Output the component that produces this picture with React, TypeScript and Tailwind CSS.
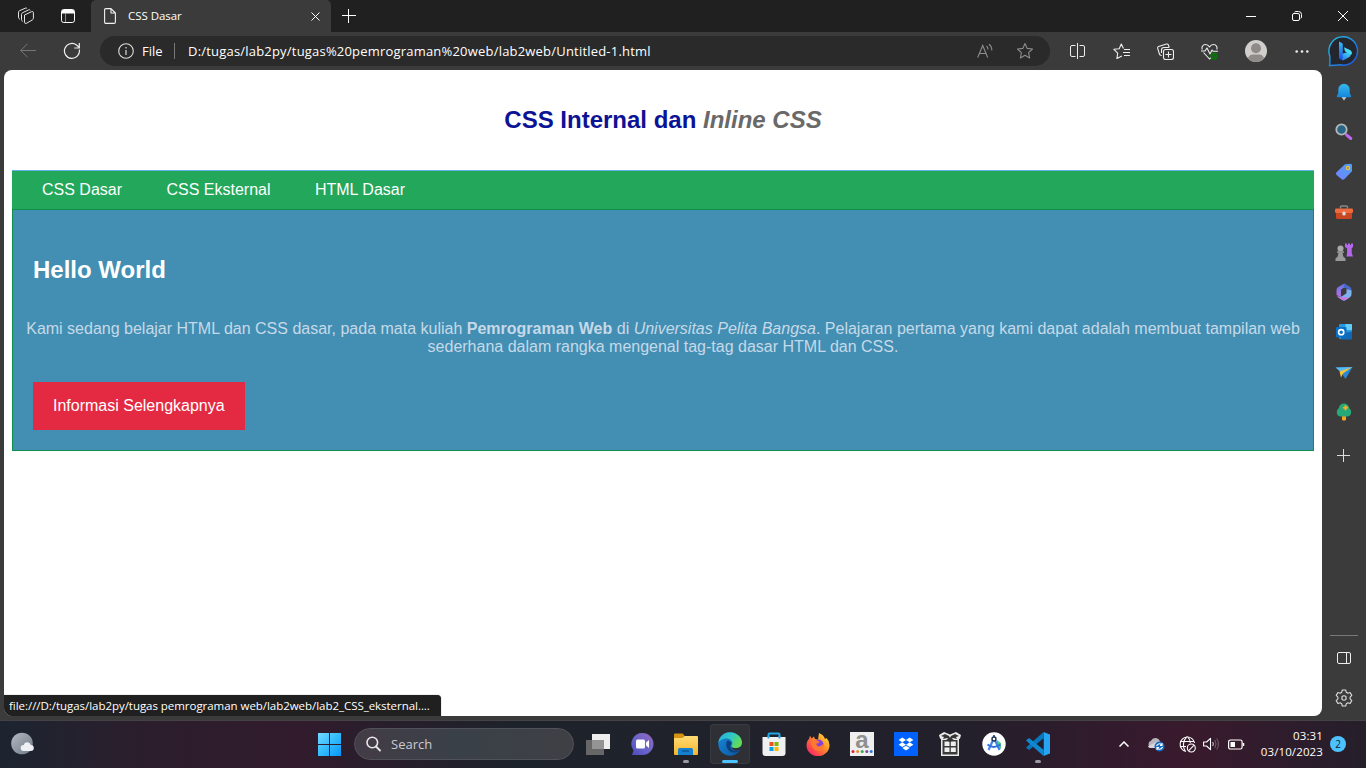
import type { ReactNode } from "react";

const ui = "font-['Open_Sans','Noto_Sans',sans-serif]";

function Svg({ w, h = w, vb, children, className = "" }: { w: number; h?: number; vb?: string; children: ReactNode; className?: string }) {
  return (
    <svg width={w} height={h} viewBox={vb ?? `0 0 ${w} ${h}`} fill="none" className={`shrink-0 ${className}`}>
      {children}
    </svg>
  );
}

function Cell({ className, children }: { className: string; children?: ReactNode }) {
  return <div className={`flex shrink-0 items-center justify-center ${className}`}>{children}</div>;
}

function TitleBar() {
  return (
    <div className="flex h-8 shrink-0 bg-[#202020]">
      <Cell className="w-[52px]">
        <Svg w={18}>
          <g stroke="#e6e6e6" strokeWidth="1" strokeLinejoin="round">
            <path d="M7.500 8 14.500 4.700q1.800-.6 1.900.9v5.700q0 1-.9 1.500l-5.800 3.400q-2.100.9-2.200-.9z" />
            <path d="M6 14.500 5.300 14q-.8-.4-.8-1.400V7.300q0-1 1-1.500L11.500 2.900q1.500-.6 1.700.5" />
            <path d="M3 12.300 2.300 11.800q-.8-.4-.8-1.400V5.200q0-1 1-1.500L8.300 1.200q1.300-.5 1.700.4" />
          </g>
        </Svg>
      </Cell>
      <Cell className="w-8">
        <Svg w={14}>
          <rect x=".5" y=".5" width="13" height="13" rx="2.200" stroke="#fff" />
          <path d="M1 2q0-1 1-1h10q1 0 1 1v2.500H1z" fill="#fff" />
          <path d="M4.500 4v9" stroke="#aaa" strokeWidth=".8" />
        </Svg>
      </Cell>
      <div className="ml-[7px] flex w-60 items-center rounded-t-[5px] bg-[#3b3b3b] pl-[13px]">
        <Svg w={12} h={16}>
          <path d="M.6 2Q.6.600 2 .600h5l4.400 4.400v9q0 1.400-1.400 1.400H2Q.6 15.400.6 14zM7 .600V5h4.400" stroke="#f2f2f2" strokeWidth="1.100" strokeLinejoin="round" />
        </Svg>
        <span className="ml-3 flex-1 whitespace-nowrap text-[11.5px] tracking-[-0.05px] text-white">CSS Dasar</span>
        <Svg w={9} className="mr-[11px]">
          <path d="M.5.500l8 8M8.500.500l-8 8" stroke="#fff" />
        </Svg>
      </div>
      <Cell className="w-[35px]">
        <Svg w={14}>
          <path d="M6.500 0v14M0 6.500h14" stroke="#fff" />
        </Svg>
      </Cell>
      <div className="flex-1" />
      <Cell className="w-[46px]">
        <Svg w={10}>
          <path d="M0 5.500h10" stroke="#fff" />
        </Svg>
      </Cell>
      <Cell className="w-[46px]">
        <Svg w={10}>
          <rect x=".5" y="2.500" width="7" height="7" rx="1.500" stroke="#fff" />
          <path d="M2.500 1.200Q3 .500 4 .500h2.500q3 0 3 3V6q0 1-.8 1.500" stroke="#fff" />
        </Svg>
      </Cell>
      <Cell className="w-[46px]">
        <Svg w={10}>
          <path d="M0 0l10 10M10 0L0 10" stroke="#fff" />
        </Svg>
      </Cell>
    </div>
  );
}

function Toolbar() {
  return (
    <div className="flex h-[38px] shrink-0 items-center">
      <Cell className="w-14">
        <Svg w={16}>
          <path d="M.5 7.500H16M7.500.800L.700 7.500l6.800 6.700" stroke="#777" />
        </Svg>
      </Cell>
      <Cell className="w-8">
        <Svg w={18}>
          <path d="M16.300 7.500A7.500 7.500 0 1 1 13.500 3l2.300 2M16.300 1v5h-5" stroke="#f0f0f0" strokeWidth="1.200" />
        </Svg>
      </Cell>
      <div className="ml-3 flex h-[30px] w-[950px] shrink-0 items-center rounded-full bg-[#2a2a2a] pl-[18px]">
        <Svg w={16}>
          <circle cx="8" cy="8" r="7.300" stroke="#ddd" strokeWidth="1.100" />
          <path d="M8 7v5M8 4v1.500" stroke="#ddd" strokeWidth="1.200" />
        </Svg>
        <span className="ml-2 w-8 whitespace-nowrap pt-px text-[13px] text-white">File</span>
        <div className="h-4 w-px bg-[#777]" />
        <span className="ml-[13px] flex-1 whitespace-nowrap pt-px text-[13px] tracking-[0.2px] text-white">
          D:/tugas/lab2py/tugas%20pemrograman%20web/lab2web/Untitled-1.html
        </span>
        <Cell className="w-10">
          <Svg w={16}>
            <path d="M.7 14.500L5.700 2.500l5 12M2.500 10.500H9M9.500 3q1.500 1.300 1.500 3.500M12 1.200Q15 3.500 14.800 7.500" stroke="#8d8d8d" strokeWidth="1.100" />
          </Svg>
        </Cell>
        <Cell className="mr-[5px] w-10">
          <Svg w={18}>
            <path d="M9 1.500l2.200 4.900 5.300.6-3.900 3.600 1 5.400L9 13.300 4.400 16l1-5.400L1.500 7l5.300-.6z" stroke="#8d8d8d" strokeWidth="1.100" strokeLinejoin="round" />
          </Svg>
        </Cell>
      </div>
      <Cell className="ml-[5px] w-11">
        <Svg w={15} h={16}>
          <path d="M5.500 2.500H2Q.500 2.500.500 4v8q0 1.500 1.500 1.500h3.500M9.500 2.500H13q1.500 0 1.500 1.500v8q0 1.500-1.500 1.500H9.500M7.500 0v16" stroke="#eee" />
        </Svg>
      </Cell>
      <Cell className="w-[45px]">
        <Svg w={17}>
          <path d="M10.500 5.500L8.300 1 6.200 5.700.900 6.300l3.800 3.800-.8 5.400 5-2.600M11 6.500h6M10 9.500h7M11 12.500h6" stroke="#eee" strokeWidth="1.100" strokeLinejoin="round" />
        </Svg>
      </Cell>
      <Cell className="w-[43px]">
        <Svg w={17}>
          <rect x="6.500" y="6.500" width="10" height="10" rx="2" stroke="#eee" strokeWidth="1.100" />
          <path d="M11.500 8.500v6M8.500 11.500h6M4.700 12.500l-1-.2q-1-.3-1.300-1.300L.700 5.300Q.400 4 1.600 3.500L9.500 1q1.300-.3 1.800.8l1 2.700M4.500 10V7q0-2.500 2.500-2.500h5" stroke="#eee" strokeWidth="1.100" />
        </Svg>
      </Cell>
      <Cell className="w-11">
        <Svg w={17}>
          <path d="M1.300 6.500C.4 4.500 1.500 1.500 4.500 1.500Q7 1.500 8.500 4 10 1.500 12.500 1.500c3 0 4.100 3 3.200 5M2.500 9.500L8.500 16l2-2M0 8h4l2-3 3 6 2-4 1.200 1.300H17" stroke="#eee" strokeWidth="1.100" strokeLinejoin="round" />
          <circle cx="13" cy="13.300" r="3.700" fill="#0d700d" />
          <path d="M11.300 13.300l1.300 1.300 2.300-2.400" stroke="#3d3d3d" />
        </Svg>
      </Cell>
      <Cell className="w-[49px]">
        <Svg w={22}>
          <circle cx="11" cy="11" r="11" fill="#d1cfcc" />
          <circle cx="11" cy="8.300" r="5" fill="#8e8b88" />
          <path d="M3 18.500Q4 14.500 8 14.500h6q4 0 5 4A11 11 0 0 1 3 18.500z" fill="#8e8b88" />
        </Svg>
      </Cell>
      <Cell className="w-11">
        <Svg w={14} h={3}>
          <circle cx="1.700" cy="1.500" r="1.300" fill="#eee" />
          <circle cx="7" cy="1.500" r="1.300" fill="#eee" />
          <circle cx="12.300" cy="1.500" r="1.300" fill="#eee" />
        </Svg>
      </Cell>
      <Cell className="w-10">
        <Svg w={32}>
          <defs>
            <linearGradient id="ring" x1="0" y1="0" x2="1" y2="1">
              <stop stopColor="#25c5e8" />
              <stop offset="1" stopColor="#1a4fe0" />
            </linearGradient>
            <linearGradient id="bbStem" x1="0" y1="0" x2="0" y2="1">
              <stop stopColor="#3bbcf6" />
              <stop offset="1" stopColor="#1b4fe0" />
            </linearGradient>
            <linearGradient id="bbBowl" x1="0" y1="1" x2="1" y2="0">
              <stop stopColor="#2a6df0" />
              <stop offset="1" stopColor="#45e0f2" />
            </linearGradient>
          </defs>
          <path d="M1.500 30.500q.7-1.500.3-9.500A14.300 14.300 0 1 1 16 30.300q-2-.3-4-.5-4 .5-10.500.7z" fill="#23272d" stroke="url(#ring)" strokeWidth="1.400" />
          <path d="M15 25.500 11.500 23v-3.500L20 17l3-.5q1 3-1.200 5.300z" fill="url(#bbBowl)" />
          <path d="M16 12.300l6 2.600q2.300 1.200 1.800 4.600l-4.800-2-2-1.300z" fill="#45dcf2" />
          <path d="M11 6.500l3.200 1.700q.6.400.6 1.200v13.200q0 1.500-1.200 1.900L11.700 24q-.7-.5-.7-1.300z" fill="url(#bbStem)" />
        </Svg>
      </Cell>
    </div>
  );
}

function BrowserPage() {
  return (
    <main className="relative flex w-[1318px] shrink-0 flex-col overflow-hidden rounded-lg bg-white px-2 font-['Liberation_Sans',Arial,sans-serif]">
      <h1 className="mt-9 h-16 text-center text-2xl leading-[28px] font-bold text-[#0c1396]">
        CSS Internal dan <i className="text-[#696969]">Inline CSS</i>
      </h1>
      <nav className="flex h-[39px] shrink-0 items-center gap-[44.45px] border-t border-[#62b3e4] bg-[#22a75b] pl-[30px] text-base text-white">
        <a>CSS Dasar</a>
        <a>CSS Eksternal</a>
        <a>HTML Dasar</a>
      </nav>
      <section className="flex h-[242px] shrink-0 flex-col border border-[#0f904a] bg-[#428fb3]">
        <h2 className="mt-[46px] ml-5 text-2xl leading-7 font-bold text-white">Hello World</h2>
        <p className="mt-9 text-center text-base leading-[18px] text-[#c6d9e8]">
          Kami sedang belajar HTML dan CSS dasar, pada mata kuliah <b>Pemrograman Web</b> di <i>Universitas Pelita Bangsa</i>. Pelajaran pertama yang kami dapat adalah membuat tampilan web
          <br />
          sederhana dalam rangka mengenal tag-tag dasar HTML dan CSS.
        </p>
        <a className="mt-[26px] ml-5 flex h-12 w-[212px] items-center bg-[#e42a42] pl-5 text-base text-white">Informasi Selengkapnya</a>
      </section>
      <div className={`absolute bottom-0 left-0 flex h-[21px] w-[437px] items-center rounded-tr-[4px] bg-[#202020] pl-[5px] text-[11.5px] whitespace-nowrap text-white shadow-[0_0_1px_#555] ${ui}`}>
        <span className="tracking-[-0.04px]">file:///D:/tugas/lab2py/tugas pemrograman web/lab2web/lab2_CSS_eksternal....</span>
      </div>
    </main>
  );
}

function Sidebar() {
  return (
    <aside className="flex w-[44px] flex-col items-center pt-0.5">
      <Cell className="h-10">
        <Svg w={16} h={18}>
          <defs>
            <linearGradient id="bell" x1="0" y1="0" x2="0" y2="1">
              <stop stopColor="#35b9ee" />
              <stop offset="1" stopColor="#1685dc" />
            </linearGradient>
          </defs>
          <path d="M5.500 14h5L8 17.500z" fill="#c8cdd0" />
          <path d="M2.300 6.500a5.700 5.700 0 0 1 11.400 0V10l1.500 3.300q.2.900-.7.900h-13q-.9 0-.7-.9L2.300 10z" fill="url(#bell)" />
        </Svg>
      </Cell>
      <Cell className="h-10">
        <Svg w={18}>
          <path d="M11.500 11.800l4.300 3.700" stroke="#c065ee" strokeWidth="3" strokeLinecap="round" />
          <circle cx="6.500" cy="6.500" r="5.200" fill="#286584" stroke="#b5b8bb" strokeWidth="1.800" />
        </Svg>
      </Cell>
      <Cell className="h-10">
        <Svg w={18}>
          <defs>
            <linearGradient id="tag" x1="1" y1="0" x2="0" y2="1">
              <stop stopColor="#4ba1f3" />
              <stop offset="1" stopColor="#7382ff" />
            </linearGradient>
          </defs>
          <path d="M10 1.300 15.500.700q1.500 0 1.500 1.500v6L9.500 16q-1.500 1.300-2.800.2L1.500 12Q.3 10.500 1.500 9.300z" fill="url(#tag)" />
          <circle cx="13" cy="5" r="1.500" fill="#4d62ad" stroke="#efc233" strokeWidth="1.400" />
        </Svg>
      </Cell>
      <Cell className="h-10">
        <Svg w={18} h={16}>
          <path d="M5.500 4.500V3q0-1 1-1h5q1 0 1 1v1.500" stroke="#8b8b8b" strokeWidth="1.400" />
          <rect y="4.500" width="18" height="4.500" rx="1.300" fill="#ef6a3c" />
          <path d="M1 9h16v4.500q0 1.500-1.500 1.500h-13Q1 15 1 13.500z" fill="#c94720" />
          <rect x="7.300" y="7.500" width="3.400" height="4" rx="1.500" fill="#d5dce0" />
        </Svg>
      </Cell>
      <Cell className="h-10">
        <Svg w={18}>
          <path d="M10 .500h1.800v1.500h1V.500h2.200v1.500h1V.500H18V4l-1.300 1.200V10l1.300 3.500h-6.500l.6-3.500V5.200L10 4z" fill="#b767ee" />
          <circle cx="5.500" cy="5.500" r="3" fill="#aaa" />
          <path d="M2 8.200h7v1.500H7.500L8.300 13.500 10.500 15.500V18H.500v-2.500L2.700 13.500l.8-3.800H2z" fill="#999" />
        </Svg>
      </Cell>
      <Cell className="h-10">
        <Svg w={18}>
          <defs>
            <linearGradient id="ofa" x1="0" y1="0" x2="0" y2="1">
              <stop stopColor="#6077e8" />
              <stop offset="1" stopColor="#b76de5" />
            </linearGradient>
          </defs>
          <path d="M9.500.500L3.200 4Q1.500 5 1.500 7v5l4.500 2V7.500q0-1 .8-1.500L11 3.500z" fill="url(#ofa)" />
          <path d="M9.500.500l5.300 3.200q1.700 1 1.700 3V9l-5-3.500-3-1z" fill="#4769cb" />
          <path d="M16.500 7.500v3.700q0 2-1.500 3l-4.500 3q-1.500.8-3 0L2 13.500l3 .2q1 .2 2-.4l4.500-3V6z" fill="#7db0ed" />
          <path d="M2 13.500l5.500 3.500q1.500.8 3 0L14 14.700z" fill="#c877e1" />
        </Svg>
      </Cell>
      <Cell className="h-10">
        <Svg w={18}>
          <rect x="4" y="1" width="13" height="15" rx="1" fill="#2899df" />
          <path d="M10.500 1H16q1 0 1 1v5h-6.500z" fill="#62cdf8" />
          <path d="M6 10.500l11-2V15.500q0 1-1 1H6z" fill="#1368b5" />
          <rect x="1" y="4" width="10.500" height="10.500" rx="1" fill="#0870c9" />
          <circle cx="6.200" cy="9.200" r="2.600" stroke="#fff" strokeWidth="1.600" />
        </Svg>
      </Cell>
      <Cell className="h-10">
        <Svg w={18} h={14}>
          <path d="M1 2.500L17.500 2l-7 12-3-4.500z" fill="#2a87dc" />
          <path d="M.5 2.500L17.500 2 6 7z" fill="#59b9f2" />
          <path d="M17 2.200L8 8.500 6 12.500 4.500 6.500z" fill="#f6c637" />
        </Svg>
      </Cell>
      <Cell className="h-10">
        <Svg w={16} h={18}>
          <rect x="6" y="12" width="4" height="5.500" rx="1" fill="#f3a522" />
          <path d="M8 .500c3 0 5 2.500 5.300 4.700 2.300 1.800 2.300 4.800 1 6.800-.8 1.200-2.300 1.500-3.500 1.500H5c-3 0-4.300-2-4.200-4 0-2 .7-3.300 2-4.300C3.200 2.500 5 .500 8 .500z" fill="#27a878" />
          <path d="M9.500 2l1 1.700 1.700 1-1.700 1-1 1.700-1-1.700-1.700-1 1.700-1z" fill="#f8ac25" stroke="#f8ac25" strokeWidth=".6" />
        </Svg>
      </Cell>
      <Cell className="h-[47px]">
        <Svg w={13} className="mr-px">
          <path d="M6.500 0v13M0 6.500h13" stroke="#ddd" />
        </Svg>
      </Cell>
      <div className="mt-auto h-px w-7 bg-[#777]" />
      <Cell className="mt-0.5 h-10">
        <Svg w={14} h={12}>
          <rect x=".5" y=".5" width="13" height="11" rx="1.500" stroke="#eee" />
          <path d="M9.500 0v12" stroke="#eee" />
        </Svg>
      </Cell>
      <Cell className="-mb-0.5 h-10">
        <Svg w={18}>
          <path d="M7.300 1h3.400l.6 2.300 1.500.9 2.300-.7 1.700 2.900L15.100 8.100v1.800l1.700 1.700-1.700 2.900-2.300-.7-1.500.9-.6 2.300H7.300l-.6-2.300-1.500-.9-2.300.7-1.700-2.900 1.700-1.700V8.100L1.200 6.400l1.700-2.900 2.300.7 1.500-.9z" stroke="#ddd" strokeWidth="1.100" strokeLinejoin="round" />
          <circle cx="9" cy="9" r="2.200" stroke="#ddd" strokeWidth="1.100" />
        </Svg>
      </Cell>
    </aside>
  );
}

function AppCell({ active = false, running = false, children }: { active?: boolean; running?: boolean; children: ReactNode }) {
  return (
    <div className={`relative mx-0.5 flex h-10 w-10 shrink-0 items-center justify-center rounded ${active ? "bg-[#2e3036] ring-1 ring-[#393b41] ring-inset" : ""}`}>
      {children}
      {active && <span className="absolute bottom-px h-[3px] w-4 rounded-full bg-[#4cc2ff]" />}
      {running && <span className="absolute bottom-px h-[3px] w-1.5 rounded-full bg-[#9b9b9f]" />}
    </div>
  );
}

const bins = [
  ["3", "#d92632"],
  ["7.600", "#ed8e28"],
  ["12.200", "#38a852"],
  ["16.800", "#8244a6"],
  ["21.200", "#247ed5"],
];

function Taskbar() {
  return (
    <footer className={`flex h-12 shrink-0 items-center border-t border-[#444247] bg-[linear-gradient(90deg,#1c2430_0%,#2b1e2c_10%,#311b2c_22%,#271f2b_29%,#1d232b_38%,#20222b_52%,#22202b_70%,#301b2c_80%,#391a2d_87%,#2b1d2b_96%,#251f2a_100%)] pb-px ${ui}`}>
      <Cell className="w-[46px]">
        <Svg w={24}>
          <defs>
            <linearGradient id="moon" x1="0" y1="0" x2="1" y2="1">
              <stop stopColor="#b4bac3" />
              <stop offset="1" stopColor="#707985" />
            </linearGradient>
          </defs>
          <circle cx="11" cy="11.500" r="10.800" fill="url(#moon)" />
          <path d="M12.500 19a3 3 0 0 1 .3-6q.7-3 4-2.700 2.400.5 3 2.700a3 3 0 0 1 0 6z" fill="#eef0f4" />
        </Svg>
      </Cell>
      <Cell className="ml-[271px] w-6">
        <Svg w={24}>
          <defs>
            <linearGradient id="win" gradientUnits="userSpaceOnUse" x1="0" y1="0" x2="24" y2="24">
              <stop stopColor="#7bdcff" />
              <stop offset=".5" stopColor="#35bdfb" />
              <stop offset="1" stopColor="#0796fa" />
            </linearGradient>
          </defs>
          <path d="M1 1h11v11H1zM13 1h11v11H13zM1 13h11v11H1zM13 13h11v11H13z" fill="url(#win)" />
        </Svg>
      </Cell>
      <div className="ml-[13px] flex h-8 w-[220px] shrink-0 items-center rounded-full border border-[#515159] bg-[linear-gradient(90deg,#433c46,#3a4048_45%,#3e4045)] pl-[11px]">
        <Svg w={15} h={16}>
          <circle cx="6.300" cy="6.500" r="5.300" stroke="#e7e7e9" strokeWidth="1.600" />
          <path d="M10 10.500l4 4" stroke="#e7e7e9" strokeWidth="1.800" strokeLinecap="round" />
        </Svg>
        <span className="ml-[10px] pt-px text-[13px] text-[#cbcbcf]">Search</span>
      </div>
      <div className="ml-0.5 flex">
        <AppCell>
          <Svg w={24}>
            <path d="M6 2h18v15H6z" fill="#eee" />
            <path d="M0 8h18v15H0z" fill="#676767" />
            <path d="M6 8h12v9H6z" fill="#949494" />
          </Svg>
        </AppCell>
        <AppCell>
          <Svg w={24}>
            <defs>
              <linearGradient id="chat" x1="1" y1="0" x2="0" y2="1">
                <stop stopColor="#9468bf" />
                <stop offset=".6" stopColor="#6563c9" />
                <stop offset="1" stopColor="#5148bd" />
              </linearGradient>
            </defs>
            <path d="M12.500 1a11 11 0 0 1 0 22H2l1.500-4.500A11 11 0 0 1 12.500 1z" fill="url(#chat)" />
            <rect x="6" y="7.500" width="9" height="9" rx="1.500" fill="#fff" />
            <path d="M16 10.500L19 8v8l-3-2.500z" fill="#fff" />
          </Svg>
        </AppCell>
        <AppCell running>
          <Svg w={24}>
            <defs>
              <linearGradient id="fold" x1="0" y1="0" x2="0" y2="1">
                <stop stopColor="#ffdb74" />
                <stop offset="1" stopColor="#f3b62d" />
              </linearGradient>
            </defs>
            <path d="M0 2.500q0-1 1-1h7.500L10.500 3.500 8.500 6H0z" fill="#d69312" />
            <path d="M0 6h8l2.500-2H23q1 0 1 1v17q0 1-1 1H1q-1 0-1-1z" fill="url(#fold)" />
            <path d="M4 23v-5.500Q4 16 5.500 16h12q1.500 0 1.500 1.500V23z" fill="#1480d0" />
            <path d="M8 19h7" stroke="#0b5796" strokeWidth="1.500" />
          </Svg>
        </AppCell>
        <AppCell active>
          <Svg w={24}>
            <defs>
              <linearGradient id="edgeTop" x1="0" y1="0" x2="1" y2=".5">
                <stop stopColor="#28a9e3" />
                <stop offset=".55" stopColor="#31c9c3" />
                <stop offset="1" stopColor="#64db55" />
              </linearGradient>
              <linearGradient id="edgeLow" x1="0" y1="0" x2="1" y2="1">
                <stop stopColor="#1789d8" />
                <stop offset="1" stopColor="#0d559f" />
              </linearGradient>
            </defs>
            <circle cx="12" cy="12" r="11.700" fill="url(#edgeLow)" />
            <path d="M.400 11C1 4.500 6 .300 12 .300c7 0 12 5.200 12 10.200 0 3.500-2.700 5.700-6.200 5.700-2.800 0-4.400-1-4.400-2 0-.8.900-1.200.9-2.900C14.300 8.800 12 6.500 8.500 6.500 4.500 6.500 1.400 8.700.400 11z" fill="url(#edgeTop)" />
            <path d="M8.600 9.700c-1.300 5 1.600 10.300 6.300 10.800 2.700.3 5.100-.5 7-2.100-2.700 1-6 .7-8-1-2-1.500-2.500-3.400-.5-6-1.200-2.500-3.800-3.300-4.800-1.700z" fill="#0c3f7e" />
            <path d="M13.400 14.200c.3 2.500 2 3.900 4.400 4.200 2 .2 3.800-.3 4.800-1.200L24 18v-4.500c-1.500 1.800-3.700 2.700-6.200 2.700-2.600 0-4.100-.9-4.400-2z" fill="#2e3036" />
          </Svg>
        </AppCell>
        <AppCell>
          <Svg w={24}>
            <path d="M6.500 6V2.500q0-1 1-1h9q1 0 1 1V6" stroke="#22a9e5" strokeWidth="2" />
            <path d="M.5 5h23v16q0 3-3 3H3.500q-3 0-3-3z" fill="#f0f0f0" />
            <path d="M6.500 4v2.500M17.500 4v2.500" stroke="#22a9e5" strokeWidth="2" />
            <path d="M7.500 10h4v4h-4z" fill="#f04e23" />
            <path d="M12.500 10h4v4h-4z" fill="#7cb900" />
            <path d="M7.500 15h4v4h-4z" fill="#00a0ed" />
            <path d="M12.500 15h4v4h-4z" fill="#fdb900" />
          </Svg>
        </AppCell>
        <AppCell>
          <Svg w={24}>
            <defs>
              <linearGradient id="fox" x1="1" y1="0" x2="0" y2="1">
                <stop stopColor="#fff044" />
                <stop offset=".4" stopColor="#ff9427" />
                <stop offset=".75" stopColor="#ff4150" />
                <stop offset="1" stopColor="#e31587" />
              </linearGradient>
            </defs>
            <path d="M4 3.500l1.500 3L8 4.500l1 2.500 3 .5 1-6.500q5 2 6 6l1.500-1Q23.500 9 23.500 13A11.500 11 0 0 1 .500 13.500Q.500 9 3 7z" fill="url(#fox)" />
            <circle cx="12.500" cy="12.500" r="5" fill="#8842d8" />
            <path d="M4.500 11q2-4 7-2.500l2 1.500q-1 1.500-3 1.500-.5 2.500 3 3 3-.5 4-3.500 1 6-4 8-6 1-9-8z" fill="#ff7832" />
          </Svg>
        </AppCell>
        <AppCell>
          <div className="relative flex h-6 w-6 justify-center bg-[#efefef] font-['Liberation_Sans',sans-serif] text-[24px] leading-[17px] font-bold text-[#909090]">
            <span className="-mt-px">a</span>
            <svg className="absolute inset-0" width="24" height="24">
              {bins.map(([x, c]) => (
                <circle key={c} cx={x} cy="19.500" r="1.500" fill={c} />
              ))}
            </svg>
          </div>
        </AppCell>
        <AppCell>
          <Svg w={24}>
            <path d="M0 0h24v24H0z" fill="#0061fe" />
            <path d="M8.300 5.500l3.700 2.400-3.700 2.400-3.700-2.400zM15.700 5.500l3.700 2.400-3.700 2.400L12 7.900zM8.300 10.300l3.700 2.400-3.700 2.400-3.700-2.400zM15.700 10.300l3.700 2.400-3.700 2.400-3.700-2.400zM12 13.700l3.700 2.400L12 18.500l-3.700-2.400z" fill="#fff" />
          </Svg>
        </AppCell>
        <AppCell>
          <Svg w={24}>
            <path d="M1 3l5-3 6 2.500L18 0l5 3-1 3.500-1 .5v17H3V7l-1-.5z" fill="#eaeaea" />
            <path d="M3 4l4-2 4 2 1 2 1-2 4-2 4 2-3 1 1 2-4-1-3 2-3-2-4 1 1-2z" fill="#343434" />
            <path d="M4.500 8h15v14.500h-15z" fill="#3a3a3a" />
            <path d="M6.500 9.500h5V14h-5zM12.800 9.500h5V14h-5zM6.500 15.500h5V20h-5zM12.800 15.500h5V20h-5z" fill="#eee" />
            <path d="M8 8l4-2.500L16 8l-4 2z" fill="#343434" />
          </Svg>
        </AppCell>
        <AppCell>
          <Svg w={24}>
            <circle cx="12" cy="12" r="11.700" fill="#fff" />
            <path d="M15 8l4 3v6l-5-3z" fill="#53cb83" />
            <path d="M12 6L6.500 18M12 6l5.500 12" stroke="#4285f4" strokeWidth="2.200" />
            <path d="M5.500 12.500q6 5 13 0" stroke="#3270d9" strokeWidth="2" />
            <circle cx="12" cy="7" r="2" fill="#fff" stroke="#17314f" strokeWidth="1.400" />
            <path d="M12 3v2" stroke="#17314f" strokeWidth="1.500" />
          </Svg>
        </AppCell>
        <AppCell running>
          <Svg w={24}>
            <path d="M17.500 0L24 2.500v19L17.500 24z" fill="#27a4f2" />
            <path d="M17.500 0v6.500L3 18l-3-2.500z" fill="#0877bd" />
            <path d="M17.500 24v-6.500L3 6 0 8.500z" fill="#1088cf" />
            <path d="M17.500 6.500v11l-6.500-5.500z" fill="#22212b" />
          </Svg>
        </AppCell>
      </div>
      <Cell className="ml-[52px] w-6">
        <Svg w={10} h={6}>
          <path d="M.500 5.500L5 1l4.500 4.500" stroke="#fff" strokeWidth="1.500" />
        </Svg>
      </Cell>
      <Cell className="ml-[11px] w-[18px]">
        <Svg w={18} h={16}>
          <path d="M4 12a3.800 3.800 0 0 1 0-7.200Q5.500 1.500 9 2q3 .4 4 3.300l2 5V12z" fill="#b9b3bb" />
          <path d="M4 12Q2 12 .800 10.500L10 5.500l4 .800V12z" fill="#dad7dc" />
          <circle cx="12.500" cy="10.500" r="5" fill="#156ac3" />
          <path d="M9.500 10q1-2.500 3.500-2.300l2 1.300m0-2v2.500h-2M15.500 11q-1 2.500-3.500 2.300l-2-1.300m0 2v-2.500h2" stroke="#fff" strokeWidth="1.100" />
        </Svg>
      </Cell>
      <Cell className="ml-[14px] w-[17px]">
        <Svg w={17}>
          <g stroke="#fff" strokeWidth="1.100">
            <path d="M7 15.500A7.300 7.300 0 1 1 15.600 7M1 5.500h14M1 10.500h6M8 .700C3.500 5 3.500 11 6.500 15.500M8.500.700Q11 3 11.300 7" />
            <circle cx="12.300" cy="12" r="4" />
            <path d="M9.500 14.800l5.600-5.600" />
          </g>
        </Svg>
      </Cell>
      <Cell className="ml-[7px] w-4">
        <Svg w={16} h={14}>
          <path d="M.6 5h3L7.500 1.300v11.400L3.600 9h-3z" stroke="#fff" strokeWidth="1.100" strokeLinejoin="round" />
          <path d="M9.700 5q1.300 2 0 4" stroke="#ddd" />
          <path d="M11.800 3q2.600 4 0 8M13.700 1.500q3.600 5.500 0 11" stroke="#76606f" />
        </Svg>
      </Cell>
      <Cell className="ml-2 w-[18px]">
        <Svg w={17} h={11}>
          <rect x=".6" y="1" width="13.500" height="9" rx="1.800" stroke="#fff" strokeWidth="1.200" />
          <path d="M2.500 3h4.500v5H2.500z" fill="#fff" />
          <path d="M15.500 4v3" stroke="#fff" strokeWidth="1.500" />
        </Svg>
      </Cell>
      <div className="ml-auto shrink-0 text-right text-[11.5px] leading-4 tracking-[0.12px] text-white">
        <div>03:31</div>
        <div>03/10/2023</div>
      </div>
      <div className="mr-[20px] ml-[7px] flex h-4 w-4 shrink-0 items-center justify-center rounded-full bg-[#4cc2ff] text-[10px] text-[#17232d]">2</div>
    </footer>
  );
}

export default function App() {
  return (
    <div className={`flex h-[768px] w-[1366px] flex-col overflow-hidden bg-[#3b3b3b] ${ui}`}>
      <TitleBar />
      <Toolbar />
      <div className="flex h-[646px] shrink-0 pl-1">
        <BrowserPage />
        <Sidebar />
      </div>
      <div className="h-1 shrink-0" />
      <Taskbar />
    </div>
  );
}
